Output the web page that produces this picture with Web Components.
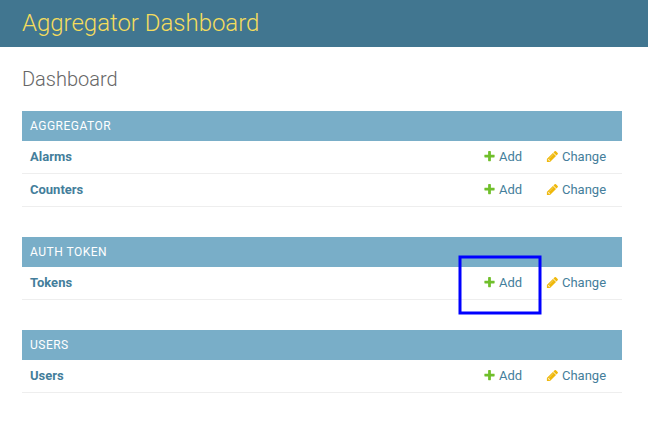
<!DOCTYPE html>
<html lang="en"><head><meta charset="utf-8"><title>Aggregator Dashboard</title>
<style>html,body{margin:0;background:#fff}body{width:648px;height:425px;overflow:hidden;font-family:Roboto,"Liberation Sans",sans-serif}</style></head><body>
<admin-page>
<admin-header>Aggregator Dashboard</admin-header>
<admin-content heading="Dashboard">
<app-module caption="Aggregator"><model-row>Alarms</model-row><model-row>Counters</model-row></app-module>
<app-module caption="Auth Token"><model-row marked>Tokens</model-row></app-module>
<app-module caption="Users"><model-row>Users</model-row></app-module>
</admin-content>
</admin-page>
<script>
const define=(name,html,setup)=>customElements.define(name,class extends HTMLElement{
 constructor(){super();this.attachShadow({mode:'open'}).innerHTML=html;}
 connectedCallback(){if(setup)setup(this,this.shadowRoot);}
});
define('admin-page','<style>:host{display:block;height:425px}</style><slot></slot>');
define('admin-header','<style>:host{display:flex;align-items:center;box-sizing:border-box;height:47px;padding:0 22px 1px;background:#417690;color:#f5dd5d}h1{margin:0;font-size:24px;line-height:28px;font-weight:300;letter-spacing:-.02px}</style><h1><slot></slot></h1>');
define('admin-content','<style>:host{display:block;padding:20px 26px 0 22px}h2{margin:0 0 20px;font-size:20px;line-height:24px;font-weight:300;color:#666}</style><h2></h2><slot></slot>',(e,r)=>r.querySelector('h2').textContent=e.getAttribute('heading'));
define('app-module','<style>:host{display:block;margin-bottom:30px}h3{box-sizing:border-box;height:30px;margin:0;padding:8px;background:#79aec8;color:#fff;font-size:12px;line-height:14px;font-weight:400;letter-spacing:.5px;text-transform:uppercase}</style><h3></h3><slot></slot>',(e,r)=>r.querySelector('h3').textContent=e.getAttribute('caption'));
define('action-link',`<style>:host{display:flex;align-items:center;color:#447e9b;font-size:13px;line-height:16px}svg{display:block;width:13px;height:13px;margin-right:3px}.pencil{display:none}:host([kind=change]) .pencil{display:block}:host([kind=change]) .plus{display:none}</style>
<svg class="plus" viewBox="0 0 1792 1792"><path fill="#70bf2b" d="M1600 736v192q0 40-28 68t-68 28h-416v416q0 40-28 68t-68 28H800q-40 0-68-28t-28-68v-416H288q-40 0-68-28t-28-68V736q0-40 28-68t68-28h416V224q0-40 28-68t68-28h192q40 0 68 28t28 68v416h416q40 0 68 28t28 68z"/></svg>
<svg class="pencil" viewBox="0 0 1792 1792"><path fill="#efb80b" fill-opacity=".3" d="M128 1248L960 416l416 416-832 832H128z"/><path fill="#efb80b" d="M491 1536l91-91-235-235-91 91v107h128v128h107zm523-928q0-22-22-22-10 0-17 7l-542 542q-7 7-7 17 0 22 22 22 10 0 17-7l542-542q7-7 7-17zm-54-192l416 416-832 832H128v-416zm683 96q0 53-37 90l-166 166-416-416 166-165q36-38 90-38 53 0 91 38l235 234q37 39 37 91z"/></svg><slot></slot>`);
define('model-row',`<style>:host{display:grid;grid-template-columns:1fr 63px 61px;align-items:center;position:relative;box-sizing:border-box;height:33px;padding:0 15px 1px 8px;border-bottom:1px solid #eee;color:#447e9b;font-size:13px;line-height:16px}b{font-weight:700}.mark{display:none}:host([marked]) .mark{display:block;position:absolute;left:436px;top:-13px;width:85px;height:62px}</style><b><slot></slot></b><action-link kind="add">Add</action-link><action-link kind="change">Change</action-link><svg class="mark" viewBox="0 0 85 62"><rect x="2" y="3" width="80" height="56" fill="none" stroke="#00f" stroke-width="3"/></svg>`);
</script></body></html>
